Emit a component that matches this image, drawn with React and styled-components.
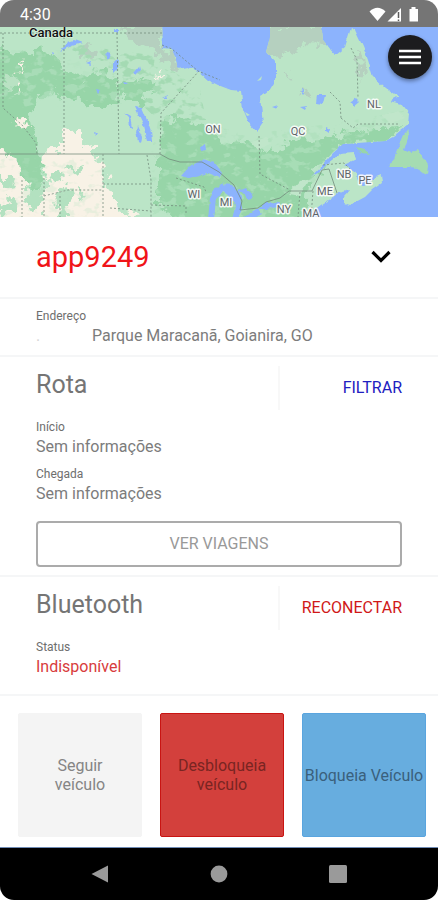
import React from "react";
import styled, { createGlobalStyle } from "styled-components";

const GlobalStyle = createGlobalStyle`
  * {
    box-sizing: border-box;
  }
  body {
    margin: 0;
    background: #fff;
    font-family: Roboto, "Liberation Sans", sans-serif;
    color: #757575;
  }
  button {
    font-family: inherit;
    border: none;
    background: none;
    padding: 0;
    margin: 0;
    cursor: pointer;
  }
`;

const Screen = styled.div`
  display: flex;
  flex-direction: column;
  min-height: 100vh;
`;

const StatusBar = styled.header`
  display: flex;
  justify-content: space-between;
  align-items: center;
  height: 27px;
  padding: 2px 18px 0 20px;
  border-radius: 14px 14px 0 0;
  background: #757575;
  color: #fff;
`;

const Clock = styled.span`
  font-size: 16px;
  line-height: 20px;
`;

const StatusIcons = styled.svg`
  display: block;
  fill: #fff;
`;

const MapArea = styled.div`
  position: relative;
  height: 190px;
  overflow: hidden;
  background: #8cb3fd;
`;

const MapDrawing = styled.svg`
  display: block;
  width: 100%;
  height: 100%;
`;

const MenuButton = styled.button`
  position: absolute;
  top: 8px;
  right: 6px;
  display: flex;
  justify-content: center;
  align-items: center;
  width: 44px;
  height: 44px;
  border-radius: 50%;
  background: #1c1c1e;
  box-shadow: 0 2px 4px rgba(0, 0, 0, 0.4);
`;

const Vehicle = styled.div`
  display: flex;
  justify-content: space-between;
  align-items: center;
  height: 80px;
  padding: 0 46px 0 36px;
`;

const Plate = styled.h1`
  margin: 0;
  font-size: 29px;
  line-height: 36px;
  font-weight: 400;
  color: #f01418;
`;

const IconButton = styled.button`
  display: flex;
  justify-content: center;
  align-items: center;
  width: 22px;
  height: 28px;
`;

const Section = styled.section`
  padding: ${(props) => props.$padding || "9px 36px 8px"};
  border-top: 2px solid #f5f6f7;
`;

const SectionHeader = styled.div`
  display: flex;
  justify-content: space-between;
  margin-bottom: 9px;
`;

const Title = styled.h2`
  margin: 0;
  font-size: 25px;
  line-height: 38px;
  font-weight: 400;
  color: #757575;
`;

const Action = styled.button`
  width: 124px;
  height: 44px;
  border-left: 2px solid #f8f8f8;
  font-size: 16px;
  line-height: 20px;
  text-align: right;
  color: ${(props) => props.$color};
`;

const Fields = styled.dl`
  display: flex;
  flex-direction: column;
  gap: 8px;
  margin: 0;
`;

const Label = styled.dt`
  font-size: 12px;
  line-height: 16px;
  color: #6e6e6e;
`;

const Value = styled.dd`
  display: flex;
  margin: 0;
  font-size: 16px;
  line-height: 23px;
  color: ${(props) => props.$color || "#7c7c7c"};
`;

const Dot = styled.span`
  width: 56px;
  color: #d5d5d5;
`;

const TripsButton = styled.button`
  width: 100%;
  height: 46px;
  margin-top: 16px;
  border: 2px solid #ababab;
  border-radius: 4px;
  font-size: 16px;
  line-height: 20px;
  color: #999;
`;

const Tiles = styled.div`
  display: grid;
  grid-template-columns: repeat(3, 1fr);
  gap: 18px;
  flex: 1;
  align-items: start;
  padding: 17px 12px 9px 18px;
  border-top: 2px solid #f5f6f7;
`;

const Tile = styled.button`
  aspect-ratio: 1;
  border: 1px solid ${(props) => props.$border};
  border-radius: 2px;
  background: ${(props) => props.$fill};
  color: ${(props) => props.$ink};
  font-size: 16px;
  line-height: 19px;
`;

const TileText = styled.span`
  display: block;
  padding: ${(props) => (props.$narrow ? "0 30px" : "0")};
`;

const NavBar = styled.nav`
  display: grid;
  grid-template-columns: repeat(3, 1fr);
  height: 53px;
  padding: 0 40px;
  border-top: 1px solid #6f8bb5;
  border-radius: 0 0 14px 14px;
  background: #000;
`;

const NavButton = styled.button`
  display: flex;
  justify-content: center;
  align-items: center;
`;

const regions = [
  { name: "ON", x: 213, y: 133 },
  { name: "QC", x: 298, y: 135 },
  { name: "NL", x: 374, y: 108 },
  { name: "NB", x: 344, y: 178 },
  { name: "PE", x: 365, y: 184 },
  { name: "ME", x: 325, y: 195 },
  { name: "NY", x: 284, y: 213 },
  { name: "MA", x: 311, y: 217 },
  { name: "WI", x: 194, y: 198 },
  { name: "MI", x: 226, y: 206 },
];

const MapView = () => (
  <MapDrawing
    viewBox="0 27 438 190"
    preserveAspectRatio="xMidYMid slice"
    role="img"
    aria-label="Mapa"
  >
    <defs>
      <filter id="coast" x="-5%" y="-5%" width="110%" height="110%" colorInterpolationFilters="sRGB">
        <feTurbulence type="fractalNoise" baseFrequency="0.12" numOctaves="3" seed="4" />
        <feDisplacementMap in="SourceGraphic" scale="5" xChannelSelector="R" yChannelSelector="G" />
      </filter>
      <filter id="rough" x="-5%" y="-5%" width="110%" height="110%" colorInterpolationFilters="sRGB">
        <feTurbulence type="fractalNoise" baseFrequency="0.11" numOctaves="4" seed="9" />
        <feDisplacementMap in="SourceGraphic" scale="20" xChannelSelector="R" yChannelSelector="G" />
      </filter>
      <filter id="mottle" x="0" y="0" width="100%" height="100%" colorInterpolationFilters="sRGB">
        <feTurbulence type="fractalNoise" baseFrequency="0.09 0.13" numOctaves="3" seed="12" />
        <feColorMatrix values="0 0 0 0 0  0 0 0 0 0  0 0 0 0 0  8 0 0 0 -4.3" />
        <feComposite in="SourceGraphic" operator="in" />
      </filter>
      <clipPath id="land">
        <path
          id="landShape"
          d="M-5 20H162L163 48L172 49L176 60L178 69L188 67L198 71L208 80L218 85L231 90L241 91L243 110L248 122L257 132L263 123L260 97L268 91L276 78L276 63L266 52L270 37V20H321L323 40L335 55L345 47L351 28L355 30L363 47L368 60L373 77L385 88L398 97L391 101L402 104L409 113L408 125L401 130L393 137L385 141L370 142L358 143L343 144L333 152L322 165L311 177L318 173L328 164L341 154L354 153L356 159L344 165L348 167L356 172L359 181L363 187L374 178L381 175L382 183L372 190L365 197L350 205L344 203L344 197L350 190L338 193L328 200L318 207L311 213V225H-5Z"
        />
      </clipPath>
    </defs>

    <rect y="27" width="438" height="190" fill="#8cb3fd" />
    <g filter="url(#coast)">
      <use href="#landShape" fill="#bbe5c7" />
      <path
        d="M410 128L408 138L404 150L410 153L418 150L422 157L428 165L427 175L421 172L418 168L408 167L388 167L394 158L398 147L403 135Z"
        fill="#a5dcb2"
      />
      <path d="M356 147L364 149L370 154L361 153Z" fill="#98d5a8" />
    </g>

    <g clipPath="url(#land)">
      {/* tundra in the north */}
      <g filter="url(#rough)" fill="#b5d0bf">
        <path d="M120 27H163V48L174 52L178 72L162 60L148 48L130 40Z" />
        <path d="M270 25H323L325 45L304 44L294 54L288 50L276 60L264 53Z" />
        <path d="M356 50L362 58L364 80L359 74Z" />
        <path d="M78 50L92 45L98 50L90 60L82 58Z" />
        <path d="M300 90L308 92L312 98L304 97Z" />
        <path d="M285 73L292 75L296 80L289 79Z" />
      </g>

      {/* boreal forest */}
      <g filter="url(#rough)" fill="#97d5a8">
        <path d="M-8 48L20 52L50 50L62 68L78 78L102 72L118 80L118 102L100 106L66 98L54 92L36 100L30 112L34 136L42 158L44 180L34 190L24 178L16 160L-8 148Z" />
        <path d="M118 84L146 78L158 86L146 96L142 106L122 100Z" />
        <path d="M160 124L178 117L206 126L222 140L246 143L264 152L296 141L322 140L346 133L372 130L402 126L390 142L345 143L326 162L308 180L306 225H186L158 206V156Z" />
      </g>
      <path filter="url(#mottle)" d="M0 50H120L162 82L150 108L60 98L20 108L0 100Z" fill="#b4e2c1" opacity="0.6" />
      <path filter="url(#mottle)" d="M60 42L150 55L200 90L206 120L160 122L120 84Z" fill="#a4dab3" />
      <path filter="url(#mottle)" d="M160 112L250 134L330 124L408 110L340 150L300 200V225H150V160Z" fill="#aee0bc" opacity="0.7" />

      {/* open prairie */}
      <g filter="url(#rough)">
        <path d="M37 102L52 98L66 106L110 108L118 120L148 122L154 134V155H44L36 135Z" fill="#bbe5c7" />
        <path d="M104 156H152L154 182L148 186L152 220H104Z" fill="#bbe5c7" />
        <path d="M4 78L20 76L22 88L6 90Z" fill="#b9e2c3" />
      </g>
      <g filter="url(#rough)" fill="#f8f2e6">
        <path d="M42 160L48 146L62 152L62 132L82 130L79 142L96 147L92 154L102 166L106 184L114 194V206L130 212L140 228H22L28 204L40 196L50 186Z" />
        <path d="M-8 146L10 156L20 166L28 186L36 198L34 228H-8Z" />
        <path d="M14 116L27 119L29 128L17 125Z" />
        <path d="M17 64L21 66L18 75Z" />
        <path d="M17 83L24 85L21 91Z" />
        <path d="M154 76L162 74L156 80Z" />
      </g>
      <g filter="url(#rough)" fill="#b3e1c0">
        <path d="M24 190L42 188L44 200L38 210L26 206Z" />
        <path d="M56 194L68 186L74 192L66 204L68 218H58Z" />
        <path d="M64 164L82 168L80 172L68 170Z" />
        <path d="M78 190L84 192L80 204Z" />
        <path d="M46 174L60 172L66 178L54 182Z" />
        <path d="M-4 178L12 178L16 186L2 188Z" />
        <path d="M-4 208L8 198L18 206L4 216Z" />
      </g>
      <path filter="url(#mottle)" d="M0 158H102V220H0Z" fill="#b7e3c3" opacity="0.25" />
      <g filter="url(#coast)" fill="#c0e6ca">
        <path d="M300 181L309 180L300 196L288 194Z" />
        <path d="M252 142L266 137L270 145L258 150Z" />
        <path d="M381 115L398 112L404 118L390 124Z" />
      </g>
    </g>

    {/* lakes */}
    <g filter="url(#coast)" fill="#8cb3fd">
      <path d="M60 51L68 42L74 40L82 43L72 46Z" />
      <path d="M107 53L111 54L108 60L106 57Z" />
      <path d="M113 62L118 60L117 69L113 73Z" />
      <path d="M134 73L140 66L141 70L136 75Z" />
      <path d="M85 64L90 62L91 66Z" />
      <path d="M135 107L142 108L147 120L151 132L152 141L148 141L144 126Z" />
      <path d="M123 113L130 117L132 128L129 127L128 118Z" />
      <path d="M137 126L142 137L141 144L138 142L136 132Z" />
      <path d="M162 99L168 96L167 99Z" />
      <path d="M200 147L205 145L206 150L201 151Z" />
      <path d="M181 176L190 166L202 159L214 162L222 172L220 178L207 173L199 176L190 178Z" />
      <path d="M208 220L210 198L216 188L222 182L226 188L216 198L214 220Z" />
      <path d="M221 184L233 185L240 194L243 207L237 220H232L235 206L230 196L222 190Z" />
      <path d="M238 190L246 187L254 198L248 200L244 195Z" />
      <path d="M240 220L258 209L262 214L250 220Z" />
      <path d="M258 209L266 202L280 203L278 207L266 209Z" />
      <path d="M317 95L325 95L323 104L316 103Z" />
      <path d="M350 102L356 98L360 102L354 107Z" />
      <path d="M272 107L278 105L277 109Z" />
      <path d="M300 107L307 106L305 110Z" />
      <path d="M300 91L303 90L303 95Z" />
      <path d="M326 127L330 129L329 133L326 131Z" />
      <path d="M113 29H118V32H113Z" />
      <path d="M96 89L100 90L98 93Z" />
      <path d="M123 82L128 83L125 85Z" />
      <path d="M52 51L54 52L53 55Z" />
      <path d="M95 133L98 134L96 137Z" />
    </g>
    <path d="M257 81L262 76L261 80Z" fill="#bbe5c7" />
    <path d="M245 112L250 115L247 116Z" fill="#bbe5c7" />

    {/* borders */}
    <g fill="none" stroke="#708779" strokeWidth="1" opacity="0.75">
      <path d="M0 154H160L169 159L180 162H202L219 172L234 185L242 201L240 210L258 208L266 202L280 198L289 191H312L322 170L329 169L337 193" />
      <path
        d="M0 33H162M64 33V154M117 33L119 154M160 154L161 113L199 71M3 33V108L22 125L36 143L37 154M103 154V217M103 184H151M147 155L151 180V217M110 208L151 211M151 205L186 206V215M176 178L204 187L206 192M22 180V217M44 178V217M44 196L68 190H103M60 196V217M162 45L172 49L198 71L220 80M259 136L260 174L290 190M351 48L357 60L358 98M341 118L353 128L358 124H400M330 92L340 102L341 118M300 192L298 217M313 191L311 217M323 165L344 163L350 169"
        strokeDasharray="2 2"
      />
    </g>

    <g
      fontSize="11"
      fill="#5f6368"
      stroke="#fff"
      strokeOpacity="0.85"
      strokeWidth="3"
      strokeLinejoin="round"
      paintOrder="stroke"
      textAnchor="middle"
    >
      {regions.map((region) => (
        <text key={region.name} x={region.x} y={region.y}>
          {region.name}
        </text>
      ))}
    </g>
    <text
      x="29"
      y="37"
      fontSize="13"
      fontWeight="500"
      fill="#111"
      stroke="#fff"
      strokeOpacity="0.6"
      strokeWidth="1"
      paintOrder="stroke"
    >
      Canada
    </text>
  </MapDrawing>
);

const Field = ({ label, value, color, marker }) => (
  <div>
    <Label>{label}</Label>
    <Value $color={color}>
      {marker && <Dot>{marker}</Dot>}
      {value}
    </Value>
  </div>
);

const tiles = [
  { text: "Seguir veículo", fill: "#f4f4f4", border: "#f4f4f4", ink: "#858585", narrow: true },
  { text: "Desbloqueia veículo", fill: "#d3403c", border: "#c91412", ink: "#792522" },
  { text: "Bloqueia Veículo", fill: "#67addf", border: "#5aa5df", ink: "#3a607c" },
];

const App = () => {
  return (
    <>
      <GlobalStyle />
      <Screen>
        <StatusBar>
          <Clock>4:30</Clock>
          <StatusIcons width="51" height="18" viewBox="369 5 51 18" aria-hidden="true">
            <path d="M369.500 10.500Q377.500 3 385.500 10.500L377.500 20Z" />
            <path d="M401 7V20.500H387.500Z" />
            <path d="M398.500 11V17M398.500 18.500V20" stroke="#5c5c5c" strokeWidth="1.500" />
            <path d="M409.500 8H411.500V6H415.500V8H418V20.500H409.500Z" />
          </StatusIcons>
        </StatusBar>

        <MapArea>
          <MapView />
          <MenuButton aria-label="Menu">
            <svg
              width="22"
              height="16"
              viewBox="0 0 22 16"
              stroke="#fff"
              strokeWidth="2.400"
              aria-hidden="true"
            >
              <path d="M0 2H22M0 8H22M0 14H22" />
            </svg>
          </MenuButton>
        </MapArea>

        <Vehicle>
          <Plate>app9249</Plate>
          <IconButton aria-label="Expandir">
            <svg
              width="20"
              height="14"
              viewBox="0 0 20 14"
              fill="none"
              stroke="#000"
              strokeWidth="3.200"
              aria-hidden="true"
            >
              <path d="M1.500 2L10 10.500L18.500 2" />
            </svg>
          </IconButton>
        </Vehicle>

        <Section>
          <Fields>
            <Field label="Endereço" marker="." value="Parque Maracanã, Goianira, GO" />
          </Fields>
        </Section>

        <Section>
          <SectionHeader>
            <Title>Rota</Title>
            <Action $color="#2020c0">FILTRAR</Action>
          </SectionHeader>
          <Fields>
            <Field label="Início" value="Sem informações" />
            <Field label="Chegada" value="Sem informações" />
          </Fields>
          <TripsButton>VER VIAGENS</TripsButton>
        </Section>

        <Section $padding="9px 36px 16px">
          <SectionHeader>
            <Title>Bluetooth</Title>
            <Action $color="#d01818">RECONECTAR</Action>
          </SectionHeader>
          <Fields>
            <Field label="Status" value="Indisponível" color="#d83c3c" />
          </Fields>
        </Section>

        <Tiles>
          {tiles.map((tile) => (
            <Tile key={tile.text} $fill={tile.fill} $border={tile.border} $ink={tile.ink}>
              <TileText $narrow={tile.narrow}>{tile.text}</TileText>
            </Tile>
          ))}
        </Tiles>

        <NavBar>
          <NavButton aria-label="Voltar">
            <svg width="18" height="18" viewBox="0 0 18 18" fill="#9a9a9a" aria-hidden="true">
              <path d="M0.500 9L17 0.500V17.500Z" />
            </svg>
          </NavButton>
          <NavButton aria-label="Início">
            <svg width="18" height="18" viewBox="0 0 18 18" fill="#9a9a9a" aria-hidden="true">
              <circle cx="9" cy="9" r="8.400" />
            </svg>
          </NavButton>
          <NavButton aria-label="Recentes">
            <svg width="18" height="18" viewBox="0 0 18 18" fill="#9a9a9a" aria-hidden="true">
              <rect width="18" height="18" rx="1.500" />
            </svg>
          </NavButton>
        </NavBar>
      </Screen>
    </>
  );
};

export default App;
